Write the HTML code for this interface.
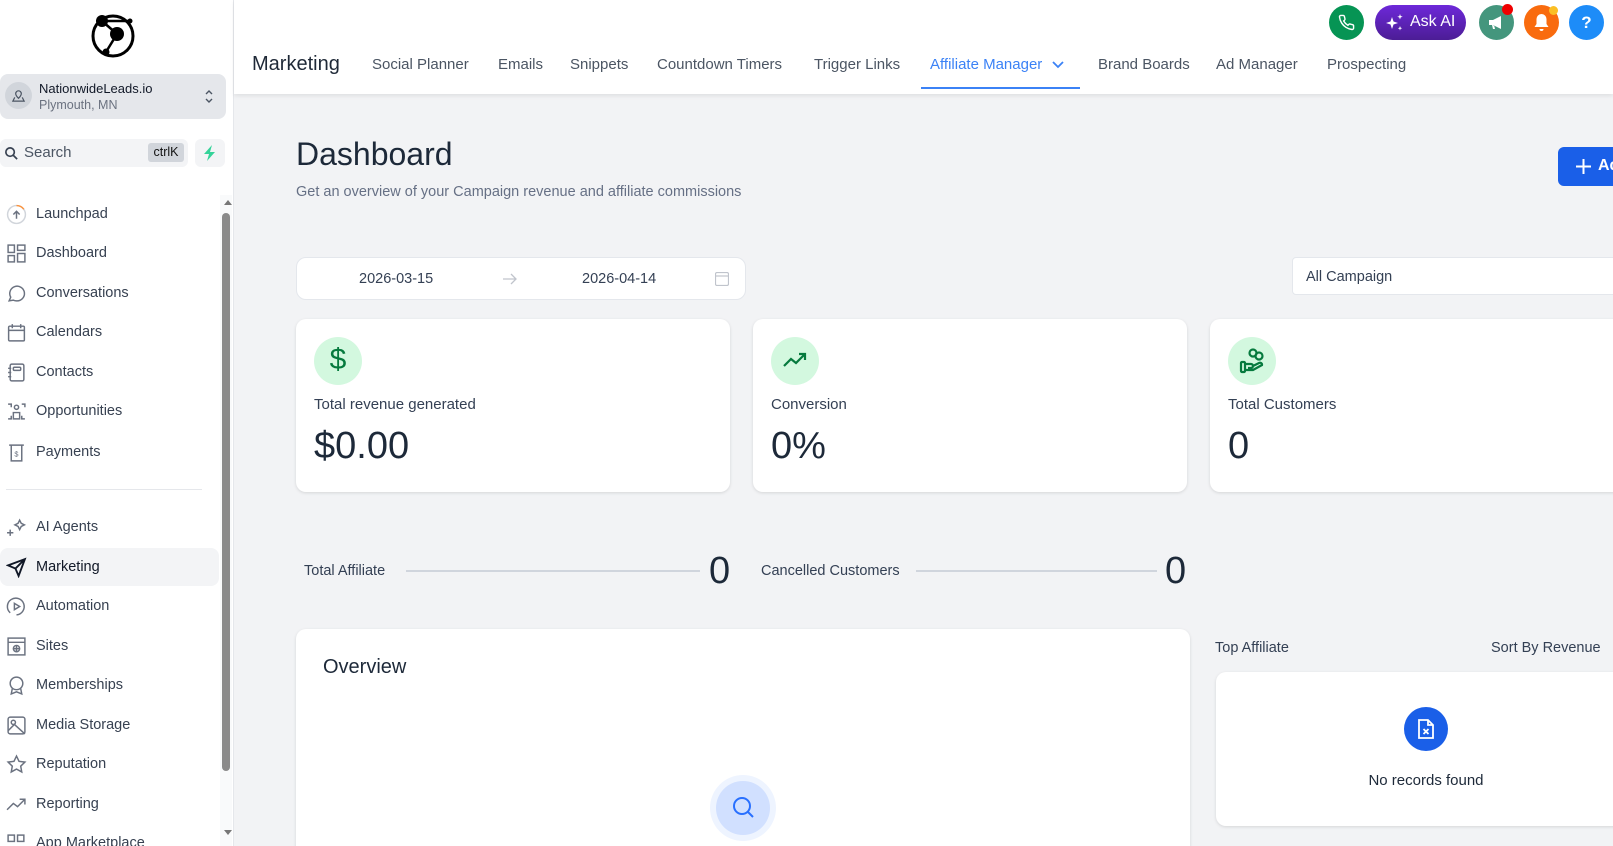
<!DOCTYPE html>
<html style="overflow:hidden"><head><meta charset="utf-8"><style>
*{box-sizing:border-box;margin:0;padding:0}
html,body{width:1613px;height:846px;overflow:hidden}
body{background:#f2f3f5;font-family:"Liberation Sans",sans-serif;position:relative;color:#344054}
.abs{position:absolute}
#sb{left:0;top:0;width:234px;height:846px;background:#fff;border-right:1px solid #e5e7eb;overflow:hidden}
.nav{position:absolute;left:0;width:219px;height:38px;display:flex;align-items:center;font-size:14.5px;color:#374151}
.nav svg{position:absolute;left:6px;width:21px;height:21px;fill:none;stroke:#6b7280;stroke-width:1.4}
.nav span{position:absolute;left:36px}
#hdr{left:234px;top:0;width:1379px;height:94px;background:#fff;box-shadow:0 2px 4px rgba(0,0,0,.08)}
.tab{position:absolute;top:56px;font-size:15px;color:#4b5563}
.card{position:absolute;background:#fff;border-radius:10px;box-shadow:0 1px 3px rgba(0,0,0,.12)}
.ic{position:absolute;left:10px;top:18px;width:48px;height:48px;border-radius:50%;background:#d3f8df}
.lbl{position:absolute;left:10px;top:77px;font-size:15px;color:#344054}
.val{position:absolute;left:10px;top:106px;font-size:38px;color:#1d2939}
.circ{position:absolute;border-radius:50%}
</style></head><body>
<div id="sb" class="abs">
 <svg class="abs" style="left:89px;top:12px" width="48" height="46" viewBox="0 0 48 46"><circle cx="24" cy="24" r="20" fill="none" stroke="#000" stroke-width="3"/><circle cx="13" cy="9" r="6" fill="#000"/><circle cx="28" cy="22" r="7" fill="#000"/><circle cx="17" cy="40" r="3.5" fill="#000"/><circle cx="41" cy="9" r="2.5" fill="#000"/><path d="M13 9L28 22L17 40M13 9H41" stroke="#000" stroke-width="2.5" fill="none"/></svg>
 <div class="abs" style="left:0;top:74px;width:226px;height:45px;background:#e5e7eb;border-radius:8px">
  <div class="circ" style="left:5px;top:8px;width:27px;height:27px;background:#d1d5db"></div>
  <svg class="abs" style="left:11px;top:14px" width="15" height="15" viewBox="0 0 16 16" fill="none" stroke="#4b5563" stroke-width="1.3"><path d="M8 11s-3-3-3-5a3 3 0 016 0c0 2-3 5-3 5z"/><path d="M4 10L2 14h12l-2-4"/></svg>
  <div class="abs" style="left:39px;top:7px;font-size:13px;color:#111827">NationwideLeads.io</div>
  <div class="abs" style="left:39px;top:24px;font-size:12.5px;color:#6b7280">Plymouth, MN</div>
  <svg class="abs" style="left:204px;top:14px" width="10" height="17" viewBox="0 0 10 17" fill="none" stroke="#4b5563" stroke-width="1.4"><path d="M2 6l3-3 3 3M2 11l3 3 3-3"/></svg>
 </div>
 <div class="abs" style="left:0;top:139px;width:188px;height:28px;background:#f3f4f6;border-radius:6px">
  <svg class="abs" style="left:4px;top:7px" width="15" height="15" viewBox="0 0 16 16" fill="none" stroke="#374151" stroke-width="1.8"><circle cx="6.5" cy="6.5" r="4.5"/><path d="M10 10l4 4"/></svg>
  <div class="abs" style="left:24px;top:5px;font-size:15px;color:#4b5563">Search</div>
  <div class="abs" style="left:148px;top:4px;width:36px;height:19px;background:#d1d5db;border-radius:3px;font-size:12.5px;color:#111;text-align:center;line-height:19px">ctrlK</div>
 </div>
 <div class="abs" style="left:195px;top:139px;width:30px;height:28px;background:#f3f4f6;border-radius:6px"><svg class="abs" style="left:8px;top:6px" width="14" height="16" viewBox="0 0 14 16"><path d="M9 0L1 9h5l-2 7 8-9H7z" fill="#34d399"/></svg></div>

 <div class="nav" style="top:195px"><svg viewBox="0 0 20 20"><circle cx="10" cy="10" r="8.5" stroke="#d1d5db"/><path d="M10 1.5a8.5 8.5 0 017 3.5" stroke="#fb923c"/><path d="M10 14V7M7 10l3-3 3 3"/></svg><span>Launchpad</span></div>
 <div class="nav" style="top:234px"><svg viewBox="0 0 20 20"><rect x="2" y="2" width="6" height="7"/><rect x="11" y="2" width="7" height="5"/><rect x="2" y="12" width="6" height="6"/><rect x="11" y="10" width="7" height="8"/></svg><span>Dashboard</span></div>
 <div class="nav" style="top:274px"><svg viewBox="0 0 20 20"><path d="M3 17l1.5-3.5A7 7 0 1110 17a7 7 0 01-3-.7z"/></svg><span>Conversations</span></div>
 <div class="nav" style="top:313px"><svg viewBox="0 0 20 20"><rect x="2.5" y="4" width="15" height="14" rx="1"/><path d="M2.5 8h15M6 2v4M14 2v4"/></svg><span>Calendars</span></div>
 <div class="nav" style="top:353px"><svg viewBox="0 0 20 20"><rect x="4" y="2" width="13" height="16" rx="1.5"/><rect x="7" y="5" width="7" height="3" rx="1"/><path d="M2 6h3M2 10h3M2 14h3"/></svg><span>Contacts</span></div>
 <div class="nav" style="top:392px"><svg viewBox="0 0 20 20"><circle cx="10" cy="6" r="2"/><path d="M7 11h6v6H7zM2 3h3v3M15 3h3v3M2 17h3v-3M18 17h-3v-3"/></svg><span>Opportunities</span></div>
 <div class="nav" style="top:433px"><svg viewBox="0 0 20 20"><path d="M3 3h14M5 3v15h10V3"/><text x="8" y="14" font-size="7" fill="#6b7280" stroke="none">$</text></svg><span>Payments</span></div>
 <div class="abs" style="left:6px;top:489px;width:196px;height:1px;background:#e5e7eb"></div>
 <div class="nav" style="top:508px"><svg viewBox="0 0 20 20"><path d="M1 15h6M4 12v6M13 3l1.5 3 3 1.5-3 1.5L13 12l-1.5-3-3-1.5 3-1.5z"/></svg><span>AI Agents</span></div>
 <div class="nav" style="top:548px;background:#f3f4f6;border-radius:8px"><svg viewBox="0 0 20 20" style="stroke:#111827;stroke-width:1.8"><path d="M18 2L2 8l7 3 3 7zM9 11l9-9"/></svg><span style="color:#111827">Marketing</span></div>
 <div class="nav" style="top:587px"><svg viewBox="0 0 20 20"><path d="M4 16A8 8 0 1110 18"/><path d="M8 7l5 3-5 3z"/></svg><span>Automation</span></div>
 <div class="nav" style="top:627px"><svg viewBox="0 0 20 20"><rect x="2" y="2" width="16" height="16"/><path d="M2 6h16"/><circle cx="10" cy="12" r="3"/><path d="M7 12h6M10 9v6"/></svg><span>Sites</span></div>
 <div class="nav" style="top:666px"><svg viewBox="0 0 20 20"><circle cx="10" cy="8" r="6"/><path d="M6 13l-1 5 5-2 5 2-1-5"/></svg><span>Memberships</span></div>
 <div class="nav" style="top:706px"><svg viewBox="0 0 20 20"><rect x="2" y="2" width="16" height="16" rx="2"/><circle cx="7" cy="7" r="2"/><path d="M2 15l6-6 10 9"/></svg><span>Media Storage</span></div>
 <div class="nav" style="top:745px"><svg viewBox="0 0 20 20"><path d="M10 2l2.4 5 5.6.7-4 3.9 1 5.5-5-2.7-5 2.7 1-5.5-4-3.9 5.6-.7z"/></svg><span>Reputation</span></div>
 <div class="nav" style="top:785px"><svg viewBox="0 0 20 20"><path d="M1 15l6-6 4 3 7-7M13 5h5v5"/></svg><span>Reporting</span></div>
 <div class="nav" style="top:824px"><svg viewBox="0 0 20 20"><rect x="2" y="2" width="6" height="6"/><rect x="11" y="2" width="6" height="6"/></svg><span>App Marketplace</span></div>
 <div class="abs" style="left:220px;top:195px;width:12px;height:651px;background:#f9fafb"></div>
 <div class="abs" style="left:224px;top:200px;width:0;height:0;border:4px solid transparent;border-bottom:5px solid #777;border-top:0"></div>
 <div class="abs" style="left:222px;top:213px;width:8px;height:558px;background:#8a8a8a;border-radius:4px"></div>
 <div class="abs" style="left:224px;top:830px;width:0;height:0;border:4px solid transparent;border-top:5px solid #777;border-bottom:0"></div>
</div>

<div id="hdr" class="abs">
 <div class="abs" style="left:18px;top:53px;font-size:20px;color:#1f2937">Marketing</div>
 <div class="tab" style="left:138px">Social Planner</div>
 <div class="tab" style="left:264px">Emails</div>
 <div class="tab" style="left:336px">Snippets</div>
 <div class="tab" style="left:423px">Countdown Timers</div>
 <div class="tab" style="left:580px">Trigger Links</div>
 <div class="tab" style="left:696px;color:#3b82f6">Affiliate Manager <svg width="12" height="8" viewBox="0 0 12 8" style="margin-left:6px" fill="none" stroke="#3b82f6" stroke-width="1.8"><path d="M1 1l5 5 5-5"/></svg></div>
 <div class="abs" style="left:687px;top:87px;width:159px;height:2px;background:#3b82f6"></div>
 <div class="tab" style="left:864px">Brand Boards</div>
 <div class="tab" style="left:982px">Ad Manager</div>
 <div class="tab" style="left:1093px">Prospecting</div>
 <div class="circ" style="left:1095px;top:5px;width:35px;height:35px;background:#069454"><svg class="abs" style="left:9px;top:9px" width="17" height="17" viewBox="0 0 24 24" fill="none" stroke="#fff" stroke-width="2"><path d="M22 16.9v3a2 2 0 01-2.2 2 19.8 19.8 0 01-8.6-3.1 19.5 19.5 0 01-6-6A19.8 19.8 0 012.1 4.2 2 2 0 014.1 2h3a2 2 0 012 1.7c.1 1 .4 1.9.7 2.8a2 2 0 01-.5 2.1L8 9.9a16 16 0 006 6l1.3-1.3a2 2 0 012.1-.4c.9.3 1.8.6 2.8.7a2 2 0 011.7 2z"/></svg></div>
 <div class="abs" style="left:1141px;top:5px;width:91px;height:35px;border-radius:18px;background:linear-gradient(#6d28d9,#4c1d95)"><svg class="abs" style="left:10px;top:9px" width="20" height="18" viewBox="0 0 20 18" fill="#fff"><path d="M7 3l1.5 4.5L13 9l-4.5 1.5L7 15l-1.5-4.5L1 9l4.5-1.5z"/><path d="M15 0l.7 2 2 .7-2 .7L15 5.5l-.7-2-2-.7 2-.7zM15 12l.6 1.6 1.6.6-1.6.6L15 16.5l-.6-1.6-1.6-.6 1.6-.6z"/></svg><div class="abs" style="left:35px;top:8px;color:#fff;font-size:16px">Ask AI</div></div>
 <div class="circ" style="left:1245px;top:5px;width:35px;height:35px;background:#44967d"><svg class="abs" style="left:9px;top:10px" width="17" height="15" viewBox="0 0 17 15" fill="#fff"><path d="M1 5h4l8-4v13L5 10H1zM4 10l1 4h2l-1-4"/></svg><div class="circ" style="left:23px;top:-1px;width:11px;height:11px;background:#ef0000"></div></div>
 <div class="circ" style="left:1290px;top:5px;width:35px;height:35px;background:#f96b0e"><svg class="abs" style="left:9px;top:8px" width="17" height="19" viewBox="0 0 17 19" fill="#fff"><path d="M8.5 1a5 5 0 015 5v5l2 3H1.5l2-3V6a5 5 0 015-5zM6.5 16h4a2 2 0 01-4 0z"/></svg><div class="circ" style="left:25px;top:1px;width:9px;height:9px;background:#fbbf24"></div></div>
 <div class="circ" style="left:1335px;top:5px;width:35px;height:35px;background:#1d8cf8;color:#fff;font-weight:bold;font-size:17px;text-align:center;line-height:35px">?</div>
</div>

<div class="abs" style="left:296px;top:136px;font-size:32px;color:#1d2939">Dashboard</div>
<div class="abs" style="left:296px;top:184px;font-size:14.5px;color:#667085">Get an overview of your Campaign revenue and affiliate commissions</div>
<div class="abs" style="left:1558px;top:147px;width:70px;height:39px;background:#1a5fe8;border-radius:6px"><svg class="abs" style="left:18px;top:12px" width="15" height="15" viewBox="0 0 15 15" stroke="#fff" stroke-width="2"><path d="M7.5 0v15M0 7.5h15"/></svg><div class="abs" style="left:40px;top:10px;color:#fff;font-weight:bold;font-size:16px">Add</div></div>

<div class="card" style="left:296px;top:257px;width:450px;height:43px;border:1px solid #e4e7ec;box-shadow:none">
 <div class="abs" style="left:62px;top:13px;font-size:14.5px;color:#344054">2026-03-15</div>
 <svg class="abs" style="left:206px;top:15px" width="14" height="12" viewBox="0 0 14 12" fill="none" stroke="#c0c4cc" stroke-width="1.3"><path d="M0 6h13M8 1l5 5-5 5"/></svg>
 <div class="abs" style="left:285px;top:13px;font-size:14.5px;color:#344054">2026-04-14</div>
 <svg class="abs" style="left:418px;top:14px" width="14" height="14" viewBox="0 0 14 14" fill="none" stroke="#c0c4cc" stroke-width="1.2"><rect x=".5" y=".5" width="13" height="13" rx="1.5"/><path d="M.5 4h13"/></svg>
</div>
<div class="card" style="left:1292px;top:257px;width:340px;height:38px;border:1px solid #e4e7ec;box-shadow:none;border-radius:4px"><div class="abs" style="left:13px;top:11px;font-size:14.5px;color:#344054">All Campaign</div></div>

<div class="card" style="left:296px;top:319px;width:434px;height:173px">
 <div class="ic" style="left:18px"><div class="abs" style="left:0;top:6px;width:48px;text-align:center;font-size:30px;color:#067a3e">$</div></div>
 <div class="lbl" style="left:18px">Total revenue generated</div><div class="val" style="left:18px">$0.00</div>
</div>
<div class="card" style="left:753px;top:319px;width:434px;height:173px">
 <div class="ic" style="left:18px"><svg class="abs" style="left:12px;top:15px" width="24" height="16" viewBox="0 0 24 16" fill="none" stroke="#067a3e" stroke-width="2.2"><path d="M1 14l7-7 5 4 9-9M16 2h6v6"/></svg></div>
 <div class="lbl" style="left:18px">Conversion</div><div class="val" style="left:18px">0%</div>
</div>
<div class="card" style="left:1210px;top:319px;width:434px;height:173px">
 <div class="ic" style="left:18px"><svg class="abs" style="left:11px;top:11px" width="27" height="26" viewBox="0 0 27 26" fill="none" stroke="#067a3e" stroke-width="2.2"><circle cx="14" cy="5" r="3.5"/><circle cx="20" cy="8" r="3.5"/><rect x="2" y="14" width="4" height="10" rx="1"/><path d="M6 16h6a2 2 0 010 4H9M6 22h8l9-5a2 2 0 00-3-2l-6 3"/></svg></div>
 <div class="lbl" style="left:18px">Total Customers</div><div class="val" style="left:18px">0</div>
</div>

<div class="abs" style="left:304px;top:563px;font-size:14.5px;color:#344054">Total Affiliate</div>
<div class="abs" style="left:406px;top:570px;width:294px;height:2px;background:#d0d5dd"></div>
<div class="abs" style="left:709px;top:550px;font-size:38px;color:#1d2939">0</div>
<div class="abs" style="left:761px;top:563px;font-size:14.5px;color:#344054">Cancelled Customers</div>
<div class="abs" style="left:916px;top:570px;width:241px;height:2px;background:#d0d5dd"></div>
<div class="abs" style="left:1165px;top:550px;font-size:38px;color:#1d2939">0</div>

<div class="card" style="left:296px;top:629px;width:894px;height:240px">
 <div class="abs" style="left:27px;top:27px;font-size:20px;color:#1d2939">Overview</div>
 <div class="circ" style="left:414px;top:146px;width:66px;height:66px;background:#eef4ff"></div>
 <div class="circ" style="left:420px;top:152px;width:54px;height:54px;background:#d1e0ff"><svg class="abs" style="left:16px;top:15px" width="24" height="24" viewBox="0 0 24 24" fill="none" stroke="#2970ff" stroke-width="2"><circle cx="10" cy="10" r="8"/><path d="M16 16l5 5"/></svg></div>
</div>
<div class="abs" style="left:1215px;top:640px;font-size:14.5px;color:#344054">Top Affiliate</div>
<div class="abs" style="left:1491px;top:640px;font-size:14.5px;color:#344054">Sort By Revenue</div>
<div class="card" style="left:1216px;top:672px;width:430px;height:154px">
 <div class="circ" style="left:188px;top:35px;width:44px;height:44px;background:#1a5fe8"><svg class="abs" style="left:13px;top:11px" width="18" height="22" viewBox="0 0 18 22" fill="none" stroke="#fff" stroke-width="1.8"><path d="M2 2h9l5 5v13H2zM11 2v5h5M6.5 11l5 5M11.5 11l-5 5"/></svg></div>
 <div class="abs" style="left:0;top:100px;width:420px;text-align:center;font-size:15px;color:#1d2939">No records found</div>
</div>
</body></html>
